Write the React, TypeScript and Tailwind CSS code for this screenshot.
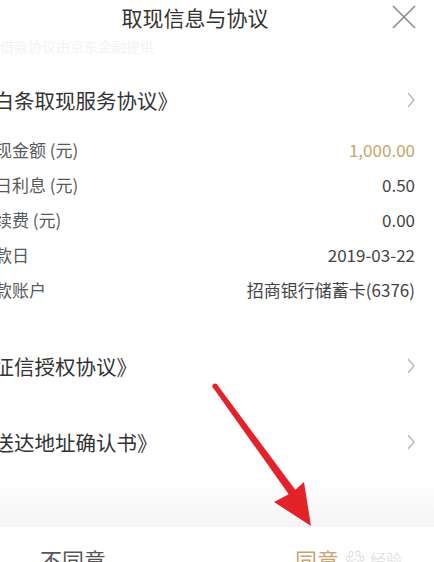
import React from "react";

const font = { fontFamily: '"Noto Sans CJK SC", "Noto Sans", sans-serif' };

function Chevron() {
  return (
    <svg width="8" height="16" viewBox="0 0 8 16" className="shrink-0">
      <polyline points="1,1 7,8 1,15" fill="none" stroke="#b5b5b5" strokeWidth="1.3" />
    </svg>
  );
}

function AgreementRow({ title, h }: { title: string; h: string }) {
  return (
    <div className={`flex shrink-0 items-center justify-between ${h}`}>
      <span className="-ml-[5px] text-[20.5px] text-[#333] whitespace-nowrap">{title}</span>
      <Chevron />
    </div>
  );
}

const details: { label: string; value: string; gold?: boolean }[] = [
  { label: "取现金额 (元)", value: "1,000.00", gold: true },
  { label: "每日利息 (元)", value: "0.50" },
  { label: "手续费 (元)", value: "0.00" },
  { label: "还款日", value: "2019-03-22" },
  { label: "还款账户", value: "招商银行储蓄卡(6376)" },
];

export default function App() {
  return (
    <div className="relative w-[434px] h-[562px] overflow-hidden bg-white" style={font}>
      <div className="-ml-[49px] w-[488px] flex flex-col">
        {/* header */}
        <div className="relative shrink-0 h-[34px] flex items-center justify-center">
          <span className="text-[21px] text-[#333] leading-none">取现信息与协议</span>
          <svg
            width="24"
            height="24"
            viewBox="0 0 24 24"
            className="absolute right-[23px] top-[5px]"
          >
            <path d="M1 1 L23 23 M23 1 L1 23" stroke="#8a8a8a" strokeWidth="1.6" fill="none" />
          </svg>
        </div>
        <div className="shrink-0 h-[24px] flex items-center pl-[49px] text-[14px] text-[#f3f3f3] whitespace-nowrap">
          借款协议由京东金融提供
        </div>

        <div className="pl-[27px] pr-[24px] flex flex-col">
          <div className="mt-[17px]">
            <AgreementRow title="《白条取现服务协议》" h="h-[50px]" />
          </div>
          <div className="mt-[7px] flex flex-col">
            {details.map((d) => (
              <div
                key={d.label}
                className="h-[35px] shrink-0 flex items-center justify-between text-[17px] whitespace-nowrap"
              >
                <span className="text-[#5a5a5a]">{d.label}</span>
                <span className={d.gold ? "text-[#c6a46c]" : "text-[#444]"}>{d.value}</span>
              </div>
            ))}
          </div>
          <div className="mt-[21px] flex flex-col">
            <AgreementRow title="《征信授权协议》" h="h-[76px]" />
            <AgreementRow title="《送达地址确认书》" h="h-[76px]" />
          </div>
        </div>

        <div className="shrink-0 h-[47px] bg-linear-to-b from-white to-[#f4f4f4]" />

        {/* action bar */}
        <div className="shrink-0 h-[64px] grid grid-cols-2 bg-white">
          <div className="flex items-center justify-center text-[22px] text-[#555]">不同意</div>
          <div className="relative flex items-center justify-center text-[22px] text-[#c9a56e]">
            同意
            <span className="absolute left-[150px] top-[20px] flex items-center gap-[5px] text-[16px] text-[#e4e4e4]">
              <svg width="20" height="20" viewBox="0 0 20 20">
                <g fill="none" stroke="#e2e2e2" strokeWidth="1.2">
                  <ellipse cx="6" cy="5" rx="2" ry="2.6" />
                  <ellipse cx="13" cy="4.5" rx="2" ry="2.6" />
                  <ellipse cx="3" cy="10" rx="1.8" ry="2.3" />
                  <ellipse cx="17" cy="9.5" rx="1.8" ry="2.3" />
                  <path d="M5 17 C5 12 8 10.5 10 10.5 C12 10.5 15 12 15 17 C13 18.5 7 18.5 5 17 Z" />
                </g>
              </svg>
              经验
            </span>
          </div>
        </div>
      </div>

      {/* red pointer arrow */}
      <svg className="absolute left-0 top-0 pointer-events-none" width="434" height="562" viewBox="0 0 434 562">
        <path
          d="M212.9 387.4 L217.1 384.6 L295.3 489.7 L304 482 L311 526 L274 502 L288.7 494.3 Z"
          fill="#e3222a"
        />
        <circle cx="215" cy="386" r="2.6" fill="#e3222a" />
      </svg>
    </div>
  );
}
